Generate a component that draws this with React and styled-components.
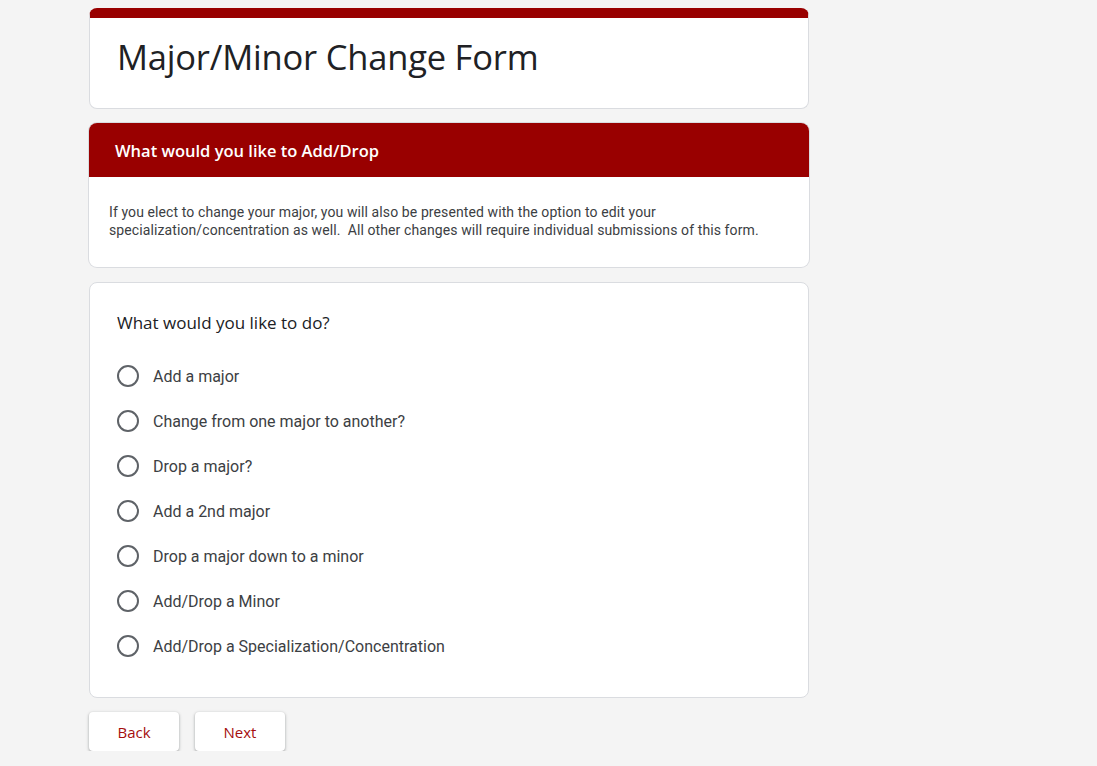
import React, { useState } from 'react'
import styled, { createGlobalStyle } from 'styled-components'

const Global = createGlobalStyle`
  body{
    margin:0;
    background:#f4f4f4;
    font-family:Roboto, "Liberation Sans", sans-serif;
  }
`

const options = [
  'Add a major',
  'Change from one major to another?',
  'Drop a major?',
  'Add a 2nd major',
  'Drop a major down to a minor',
  'Add/Drop a Minor',
  'Add/Drop a Specialization/Concentration',
]

const App = () => {
  const [picked, setPicked] = useState(null)

  return (
    <>
      <Global />
      <Page>
        <TitleCard>
          <Title>Major/Minor Change Form</Title>
        </TitleCard>

        <SectionCard>
          <SectionHead>What would you like to Add/Drop</SectionHead>
          <SectionBody>
            If you elect to change your major, you will also be presented with the option to edit your
            <br />
            specialization/concentration as well.&nbsp; All other changes will require individual submissions of this form.
          </SectionBody>
        </SectionCard>

        <QuestionCard>
          <Question>What would you like to do?</Question>
          <Options>
            {options.map((o, i) => (
              <Option key={i} onClick={() => setPicked(i)}>
                <Radio $on={picked === i} />
                <span>{o}</span>
              </Option>
            ))}
          </Options>
        </QuestionCard>

        <Buttons>
          <NavButton>Back</NavButton>
          <NavButton>Next</NavButton>
        </Buttons>
      </Page>
    </>
  )
}

export default App

const Page = styled.div`
  width:720px;
  margin-left:89px;
  padding-top:8px;
  display:flex;
  flex-direction:column;
  gap:14px;
`

const Card = styled.div`
  background:#fff;
  border:1px solid #dadce0;
  border-radius:8px;
  box-sizing:border-box;
  overflow:hidden;
`

const TitleCard = styled(Card)`
  height:101px;
  border-top:10px solid #990000;
  padding:15px 27px 0;
`

const Title = styled.h1`
  margin:0;
  font-family:"Open Sans", sans-serif;
  font-weight:400;
  font-size:34.5px;
  color:#202124;
  letter-spacing:-0.2px;
`

const SectionCard = styled(Card)`
  height:144px;
  border:none;
  box-shadow:0 0 0 1px #dadce0;
`

const SectionHead = styled.div`
  height:54px;
  background:#990000;
  color:#fff;
  display:flex;
  align-items:center;
  padding-left:26px;
  font-family:"Open Sans", sans-serif;
  font-weight:600;
  font-size:16.5px;
`

const SectionBody = styled.div`
  padding:26px 20px 0;
  font-size:14px;
  letter-spacing:0.1px;
  line-height:18px;
  color:#3c4043;
`

const QuestionCard = styled(Card)`
  height:416px;
  margin-top:1px;
  padding:28px 27px 0;
`

const Question = styled.div`
  font-family:"Open Sans", sans-serif;
  font-size:17px;
  color:#202124;
`

const Options = styled.div`
  margin-top:31px;
  display:flex;
  flex-direction:column;
  gap:23px;
`

const Option = styled.label`
  display:flex;
  align-items:center;
  gap:14px;
  height:22px;
  font-size:16px;
  color:#3c4043;
  cursor:pointer;
`

const Radio = styled.span`
  width:22px;
  height:22px;
  box-sizing:border-box;
  border:2px solid #5f6368;
  border-radius:50%;
  flex-shrink:0;
  background:${p => (p.$on ? 'radial-gradient(circle,#990000 0 5px,#fff 6px)' : '#fff')};
  border-color:${p => (p.$on ? '#990000' : '#5f6368')};
`

const Buttons = styled.div`
  display:flex;
  gap:16px;
`

const NavButton = styled.button`
  width:90px;
  height:39px;
  background:#fff;
  border:none;
  border-radius:4px;
  box-shadow:0 1px 2px rgba(60,64,67,.3), 0 1px 3px 1px rgba(60,64,67,.15);
  color:#a50e0e;
  font-family:"Open Sans", sans-serif;
  font-size:15px;
  font-weight:500;
  cursor:pointer;
`
